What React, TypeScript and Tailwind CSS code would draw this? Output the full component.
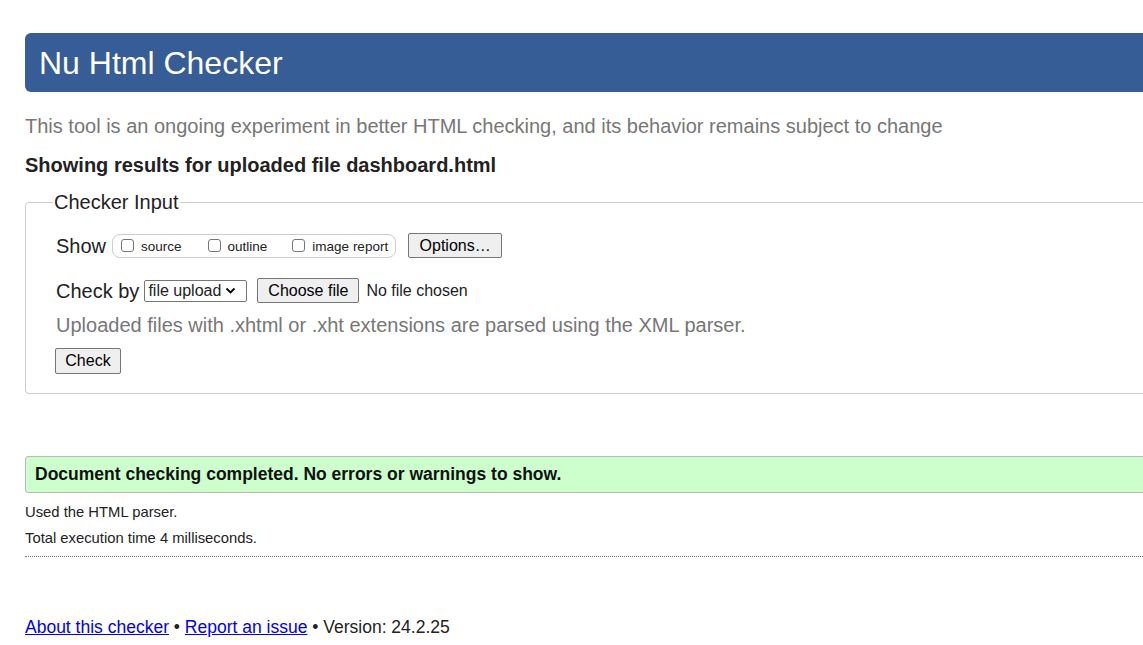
export default function App() {
  return (
    <div className="min-h-screen w-[1143px] overflow-hidden bg-white font-['Liberation_Sans',Arial,sans-serif] text-[#222]">
      <div className="ml-[25px] w-[1200px] pt-[33px]">
        <header className="flex h-[59px] items-center rounded-[6px] bg-[#365d95] pl-[14px]">
          <h1 className="text-[32px] leading-none text-white">Nu Html Checker</h1>
        </header>

        <p className="mt-[22px] text-[20px] leading-[24px] text-[#777]">
          This tool is an ongoing experiment in better HTML checking, and its behavior remains subject to change
        </p>
        <h2 className="mt-[15px] text-[20px] font-bold leading-[24px]">
          Showing results for uploaded file dashboard.html
        </h2>

        <fieldset className="mt-[13px] h-[204px] rounded-[4px] border border-[#ccc] pl-[30px] pr-0">
          <legend className="ml-[-3px] px-[1px] text-[20px] leading-[24px]">Checker Input</legend>

          <div className="mt-[19px] flex items-center">
            <span className="text-[20px] leading-[24px]">Show</span>
            <div className="ml-[6px] flex h-[24px] items-center rounded-[8px] border border-[#ccc] pl-[8px] pr-[7px] text-[13.5px]">
              <Checkbox />
              <span className="ml-[7px] mt-[3px]">source</span>
              <span className="ml-[26px]"><Checkbox /></span>
              <span className="ml-[7px] mt-[3px]">outline</span>
              <span className="ml-[25px]"><Checkbox /></span>
              <span className="ml-[7px] mt-[3px]">image report</span>
            </div>
            <Btn className="ml-[12px] w-[94px]">Options…</Btn>
          </div>

          <div className="mt-[20px] flex items-center">
            <span className="text-[20px] leading-[24px]">Check by</span>
            <div className="ml-[5px] flex h-[22px] w-[103px] items-center rounded-[2px] border border-[#767676] pl-[3px] text-[16px] leading-none">
              file upload
              <svg className="ml-[4px]" width="11" height="8" viewBox="0 0 11 8">
                <path d="M1.5 1.5 L5.5 5.5 L9.5 1.5" fill="none" stroke="#000" strokeWidth="1.8" />
              </svg>
            </div>
            <Btn className="ml-[10px] w-[102px]">Choose file</Btn>
            <span className="ml-[7px] text-[16px]">No file chosen</span>
          </div>

          <p className="mt-[10px] text-[20px] leading-[24px] text-[#777]">
            Uploaded files with .xhtml or .xht extensions are parsed using the XML parser.
          </p>

          <Btn className="ml-[-1px] mt-[11px] h-[26px] w-[66px]">Check</Btn>
        </fieldset>

        <div className="mt-[62px] flex h-[37px] items-center rounded-[3px] border border-[#bbb] bg-[#ccffcc] pl-[9px]">
          <p className="text-[17.5px] font-bold leading-none text-[#111]">
            Document checking completed. No errors or warnings to show.
          </p>
        </div>

        <p className="mt-[10px] text-[14.8px] leading-[18px]">Used the HTML parser.</p>
        <p className="mt-[8px] text-[14.8px] leading-[18px]">Total execution time 4 milliseconds.</p>
        <hr className="mt-[9px] border-t border-dotted border-[#777]" />

        <p className="mt-[59px] text-[17.5px] leading-[22px]">
          <a href="#" className="text-[#0000ee] underline">About this checker</a>
          {" • "}
          <a href="#" className="text-[#0000ee] underline">Report an issue</a>
          {" • Version: 24.2.25"}
        </p>
      </div>
    </div>
  );
}

function Checkbox() {
  return <span className="block h-[13px] w-[13px] rounded-[3px] border border-[#767676] bg-white" />;
}

function Btn({ children, className = "" }: { children: React.ReactNode; className?: string }) {
  return (
    <button
      className={`flex h-[25px] items-center justify-center rounded-[2px] border border-[#767676] bg-[#efefef] text-[16px] leading-none text-black ${className}`}
    >
      {children}
    </button>
  );
}
